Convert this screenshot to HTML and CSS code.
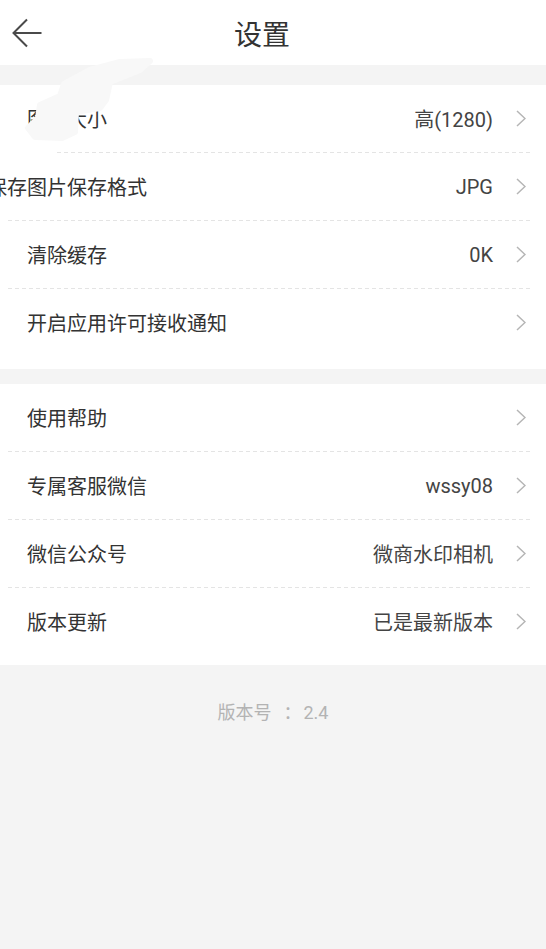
FILE: index.html
```html
<!DOCTYPE html>
<html lang="zh-CN">
<head>
  <meta charset="UTF-8" />
  <meta name="viewport" content="width=device-width, initial-scale=1.0" />
  <title>设置</title>
  <link rel="stylesheet" href="styles.css">
</head>
<body>
  <div class="header">
    <div class="back">
      <svg width="30" height="30" viewBox="0 0 30 30">
        <path d="M29.5 15 H1.8 M15 1.5 L1.5 15 L15 28.5" fill="none" stroke="#4a4a4a" stroke-width="2" />
      </svg>
    </div>
    <div class="title">设置</div>
    <div></div>
  </div>

  <div class="group first">
    <div class="row">
      <span class="label">图片大小</span>
      <span class="value">高(1280)</span>
      <svg class="arrow" width="10" height="17" viewBox="0 0 10 17"><path d="M1 1 L9 8.5 L1 16" /></svg>
    </div>
    <div class="divider short"></div>
    <div class="row">
      <span class="label shifted">保存图片保存格式</span>
      <span class="value">JPG</span>
      <svg class="arrow" width="10" height="17" viewBox="0 0 10 17"><path d="M1 1 L9 8.5 L1 16" /></svg>
    </div>
    <div class="divider"></div>
    <div class="row">
      <span class="label">清除缓存</span>
      <span class="value">0K</span>
      <svg class="arrow" width="10" height="17" viewBox="0 0 10 17"><path d="M1 1 L9 8.5 L1 16" /></svg>
    </div>
    <div class="divider"></div>
    <div class="row">
      <span class="label">开启应用许可接收通知</span>
      <span class="value"></span>
      <svg class="arrow" width="10" height="17" viewBox="0 0 10 17"><path d="M1 1 L9 8.5 L1 16" /></svg>
    </div>

    <svg class="smudge" width="160" height="100" viewBox="0 0 160 100">
      <path d="M120 12 L150 11 L140 20 L110 32 L106 50 L100 58 L76 62 L75 82 L62 88 L35 87 L28 78 L38 68 L40 55 L60 46 L64 34 L90 20 Z"
            fill="#f8f8f8" stroke="#f8f8f8" stroke-width="6" stroke-linejoin="round" />
    </svg>
  </div>

  <div class="group">
    <div class="row">
      <span class="label">使用帮助</span>
      <span class="value"></span>
      <svg class="arrow" width="10" height="17" viewBox="0 0 10 17"><path d="M1 1 L9 8.5 L1 16" /></svg>
    </div>
    <div class="divider"></div>
    <div class="row">
      <span class="label">专属客服微信</span>
      <span class="value">wssy08</span>
      <svg class="arrow" width="10" height="17" viewBox="0 0 10 17"><path d="M1 1 L9 8.5 L1 16" /></svg>
    </div>
    <div class="divider"></div>
    <div class="row">
      <span class="label">微信公众号</span>
      <span class="value">微商水印相机</span>
      <svg class="arrow" width="10" height="17" viewBox="0 0 10 17"><path d="M1 1 L9 8.5 L1 16" /></svg>
    </div>
    <div class="divider"></div>
    <div class="row">
      <span class="label">版本更新</span>
      <span class="value">已是最新版本</span>
      <svg class="arrow" width="10" height="17" viewBox="0 0 10 17"><path d="M1 1 L9 8.5 L1 16" /></svg>
    </div>
  </div>

  <div class="version">版本号<span class="sep">：</span>2.4</div>
</body>
</html>
```

FILE: styles.css
```css
body {
  margin: 0;
  background-color: #f4f4f4;
  font-family: Roboto, 'Noto Sans CJK SC', sans-serif;
  color: #333;
  min-height: 100vh;
  overflow: hidden;
}

.header {
  height: 65px;
  background-color: #fff;
  display: grid;
  grid-template-columns: 50px 1fr 72px;
  align-items: center;
}

.back {
  padding-left: 12px;
  height: 30px;
}

.back svg {
  display: block;
}

.title {
  text-align: center;
  font-size: 28px;
  color: #333;
}

.group {
  position: relative;
  background-color: #fff;
  margin-top: 20px;
  padding-bottom: 13px;
}

.group + .group {
  margin-top: 15px;
  padding-bottom: 10px;
}

.row {
  height: 67px;
  margin: 0 15px 0 8px;
  padding: 0 5px 0 19px;
  display: flex;
  align-items: center;
  font-size: 20px;
}

.label {
  flex: 1;
  color: #333;
  white-space: nowrap;
}

.label.shifted {
  margin-left: -40px;
}

.value {
  color: #444;
  margin-right: 23px;
}

.arrow {
  display: block;
}

.arrow path {
  fill: none;
  stroke: #b5b5b5;
  stroke-width: 1.5;
}

.divider {
  height: 1px;
  margin: 0 15px 0 8px;
  background: repeating-linear-gradient(90deg, #e4e4e4 0 4px, transparent 4px 7px);
}

.divider.short {
  margin-left: 57px;
}

.smudge {
  position: absolute;
  left: 0;
  top: -35px;
}

.version {
  text-align: center;
  padding-top: 36px;
  line-height: 24px;
  font-size: 18px;
  color: #b3b3b3;
}

.sep {
  margin: 0 2px 0 12px;
}
```
